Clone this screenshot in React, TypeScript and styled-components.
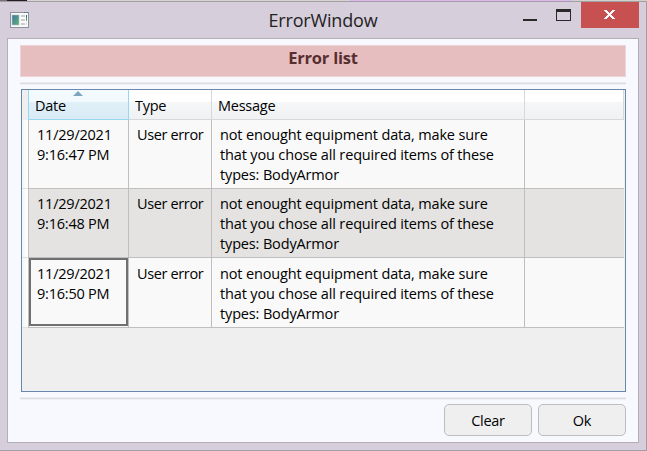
import React from "react";
import styled, { createGlobalStyle } from "styled-components";

const GlobalStyle = createGlobalStyle`
  * { box-sizing: border-box; }
  body { margin: 0; overflow: hidden; font-family: "Open Sans", "Noto Sans", sans-serif; color: #000; }
`;

const Desktop = styled.div`
  width: 647px;
  height: 451px;
  display: flex;
  flex-direction: column;
`;
const Backdrop = styled.div`
  height: 1px;
  flex: none;
  background: linear-gradient(90deg, #77727a 0 7px, #231c22 7px 27px, #d5d4ce 27px 350px, #dcb8ee 350px 572px, #d0d3c9 572px);
`;
const Window = styled.div`
  flex: 1;
  display: flex;
  flex-direction: column;
  background: #d7cedb;
  border: solid #a39ea6;
  border-width: 1px 1px 1px 0;
  padding: 0 7px 7px 7px;
`;
const TitleBar = styled.header`
  height: 36px;
  flex: none;
  display: grid;
  grid-template-columns: 116px 1fr 116px;
`;
const AppIcon = styled.svg`
  margin: 10px 0 0 3px;
  display: block;
`;
const Title = styled.h1`
  margin: 0;
  text-align: center;
  font-size: 18px;
  font-weight: 400;
  line-height: 36px;
  letter-spacing: -0.18px;
  color: #222;
`;
const Controls = styled.svg`
  display: block;
`;
const Client = styled.main`
  flex: 1;
  display: flex;
  flex-direction: column;
  background: #f8f9ff;
  border: 1px solid #b5aeb9;
  padding: 6px 12px 6px 12px;
`;
const Banner = styled.h2`
  margin: 0;
  height: 32px;
  flex: none;
  background: #e6bebf;
  border: 1px solid #edd3d7;
  text-align: center;
  font-size: 16.5px;
  font-weight: 700;
  line-height: 24px;
  letter-spacing: -0.2px;
  color: #582e30;
`;
const Rule = styled.div`
  height: 3px;
  flex: none;
  margin: 5px 0 4px;
  background: linear-gradient(#ebebf1 0 1px, #dcdce2 1px 2px, #f0f0f6 2px);
`;
const Grid = styled.section`
  height: 303px;
  flex: none;
  margin-left: 1px;
  border: 1px solid #6987ab;
  background: #efefef;
  padding-right: 1px;
`;
const columns = "6px 101px 83px 313px 1fr";
const HeaderRow = styled.div`
  display: grid;
  grid-template-columns: ${columns};
  grid-template-rows: 30px;
  height: 30px;
`;
const HeaderCell = styled.div<{ $sorted?: boolean }>`
  position: relative;
  padding-left: 6px;
  font-size: 14.5px;
  line-height: 31px;
  letter-spacing: -0.25px;
  background: ${(p) =>
    p.$sorted
      ? "linear-gradient(#f3fafd 0 12px, #e1f0f8 12px, #d8ebf5)"
      : "linear-gradient(#fff 0 12px, #f6f7f8 12px, #eff1f3)"};
  border: solid ${(p) => (p.$sorted ? "#98d7f3" : "#d7d8da")};
  border-width: ${(p) => (p.$sorted ? "0 1px 1px" : "0 1px 1px 0")};
`;
const Corner = styled.div`
  background: #efefef;
`;
const SortArrow = styled.svg`
  position: absolute;
  left: 44px;
  top: 1px;
`;
const Row = styled.div<{ $shade?: boolean; $height: number }>`
  display: grid;
  grid-template-columns: ${columns};
  height: ${(p) => p.$height}px;
  background: ${(p) => (p.$shade ? "#e4e3e1" : "#f9f9f9")};
`;
const RowHeader = styled.div`
  background: linear-gradient(90deg, #f4f5f7, #fff);
  border-bottom: 1px solid #e1e2e4;
`;
const Cell = styled.div<{ $first?: boolean; $last?: boolean; $low?: boolean; $spacing?: number }>`
  position: relative;
  padding: ${(p) => (p.$low ? 6 : 5)}px 0 0 8px;
  font-size: 14.5px;
  line-height: 20px;
  letter-spacing: ${(p) => p.$spacing ?? -0.22}px;
  white-space: pre;
  border: solid #bfbfbf;
  border-width: 0 ${(p) => (p.$last ? 0 : 1)}px 1px ${(p) => (p.$first ? 1 : 0)}px;
`;
const Focus = styled.div`
  position: absolute;
  inset: 0 0 1px 0;
  border: 2px solid #707070;
`;
const Actions = styled.footer`
  display: flex;
  justify-content: flex-end;
  gap: 6px;
`;
const Button = styled.button`
  width: 88px;
  height: 32px;
  padding: 1px 0 0;
  border: 1px solid #bdbdc1;
  border-radius: 5px;
  background: #efefef;
  font: 14.5px "Open Sans", "Noto Sans", sans-serif;
  letter-spacing: -0.3px;
  color: #000;
`;

const message =
  "not enought equipment data, make sure\nthat you chose all required items of these\ntypes: BodyArmor";
const rows = [
  { date: "11/29/2021\n9:16:47 PM", height: 69 },
  { date: "11/29/2021\n9:16:48 PM", height: 69, shade: true },
  { date: "11/29/2021\n9:16:50 PM", height: 70, focused: true },
];

export default function App() {
  return (
    <Desktop>
      <GlobalStyle />
      <Backdrop />
      <Window>
        <TitleBar>
          <AppIcon width="19" height="16" viewBox="0 0 19 16">
            <defs>
              <linearGradient id="pane" x1="0" y1="0" x2="1" y2="1">
                <stop offset="0" stopColor="#4774a4" />
                <stop offset="1" stopColor="#58b474" />
              </linearGradient>
              <linearGradient id="strip" x1="0" y1="0" x2="0" y2="1">
                <stop offset="0" stopColor="#315fa0" />
                <stop offset="1" stopColor="#55b95e" />
              </linearGradient>
            </defs>
            <rect x=".5" y=".5" width="18" height="15" fill="#fafafa" stroke="#8c929c" />
            <path d="M14 .5h1.5M16.5 .5h1.5" stroke="#5b7790" />
            <rect x="2" y="3" width="7" height="10" fill="url(#pane)" stroke="#b4bfc8" strokeWidth=".6" />
            <path d="M11 4h4M11 8h4M11 12h4" stroke="#ccc" strokeWidth="2" />
            <rect x="16" y="3" width="1" height="6" fill="url(#strip)" />
            <path d="M16.5 10v3" stroke="#ddd" />
          </AppIcon>
          <Title>ErrorWindow</Title>
          <Controls width="116" height="36" viewBox="0 0 116 36" shapeRendering="crispEdges">
            <rect x="0" y="17" width="14" height="2" fill="#292929" />
            <path fill="#292929" fillRule="evenodd" d="M33 7h15v12H33zM34 10v8h13v-8z" />
            <rect x="58" y="0" width="58" height="26" fill="#c75050" />
            <path d="M81 8h3v1h1v1h1v1h1v-1h1v-1h1v-1h3v1h-1v1h-1v1h-1v1h-1v1h1v1h1v1h1v1h1v1h-3v-1h-1v-1h-1v-1h-1v1h-1v1h-1v1h-3v-1h1v-1h1v-1h1v-1h1v-1h-1v-1h-1v-1h-1v-1h-1z" fill="#fff" />
          </Controls>
        </TitleBar>
        <Client>
          <Banner>Error list</Banner>
          <Rule />
          <Grid>
            <HeaderRow>
              <Corner />
              <HeaderCell $sorted>
                Date
                <SortArrow width="10" height="5" viewBox="0 0 10 5">
                  <path d="M0 5 5 0l5 5z" fill="#7fa5be" />
                </SortArrow>
              </HeaderCell>
              <HeaderCell>Type</HeaderCell>
              <HeaderCell>Message</HeaderCell>
              <HeaderCell />
            </HeaderRow>
            {rows.map((r) => (
              <Row key={r.date} $shade={r.shade} $height={r.height}>
                <RowHeader />
                <Cell $first $low={r.focused}>
                  {r.date}
                  {r.focused && <Focus />}
                </Cell>
                <Cell $low={r.focused} $spacing={-0.36}>User error</Cell>
                <Cell $low={r.focused} $spacing={-0.15}>{message}</Cell>
                <Cell $last />
              </Row>
            ))}
          </Grid>
          <Rule />
          <Actions>
            <Button>Clear</Button>
            <Button>Ok</Button>
          </Actions>
        </Client>
      </Window>
    </Desktop>
  );
}
